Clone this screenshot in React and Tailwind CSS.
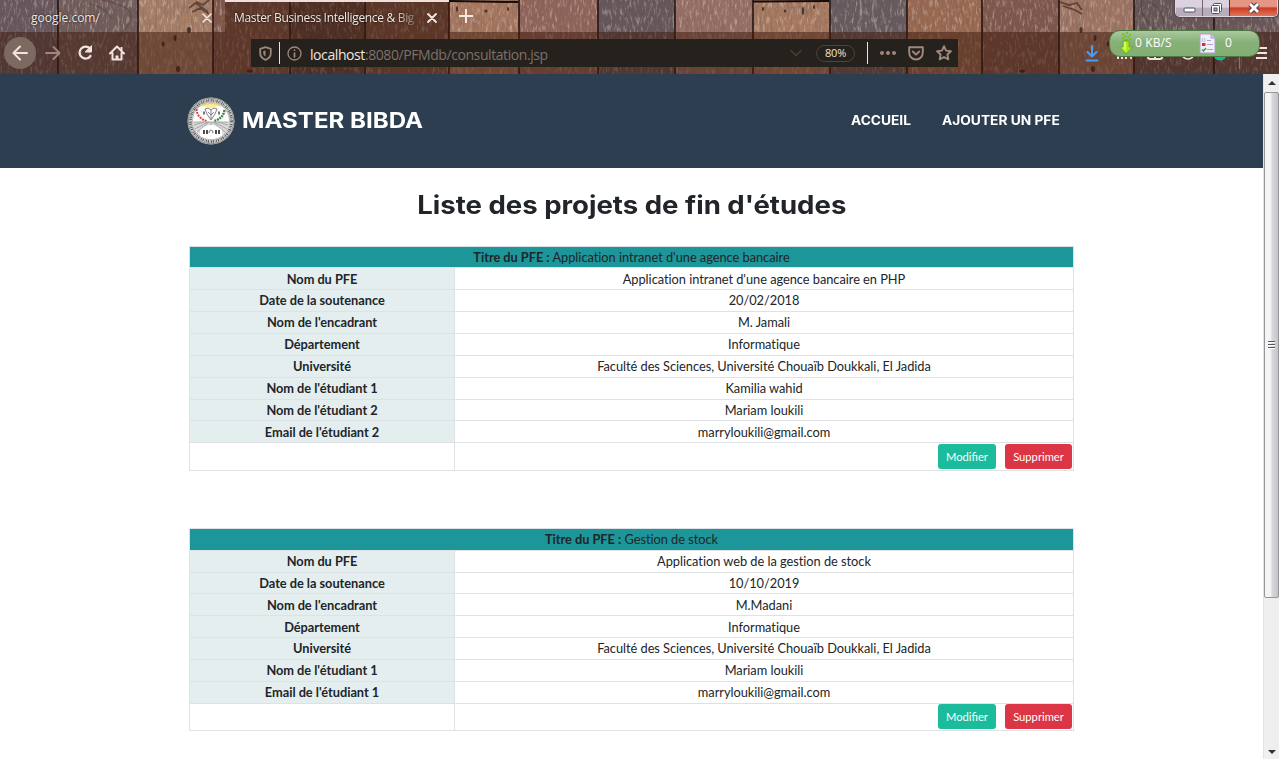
import React from "react";

const planks = [
  [0, 58, "#66575d"], [58, 80, "#705c5a"], [138, 75, "#a67d65"], [213, 77, "#7f5648"],
  [290, 75, "#60453d"], [365, 84, "#7c5545"], [449, 70, "#a6775e"], [519, 79, "#906459"],
  [598, 77, "#64565a"], [675, 78, "#966f64"], [753, 77, "#a67960"], [830, 77, "#665a5e"],
  [907, 75, "#996951"], [982, 77, "#7f564b"], [1059, 75, "#9e7462"], [1134, 80, "#655557"],
  [1214, 65, "#685657"],
];

const knots = [
  [189, 30, 2, 3], [175, 38, 1.5, 3], [163, 44, 1.5, 2.5], [178, 69, 2, 3], [457, 9, 1, 3], [486, 11, 1.5, 1.5],
  [508, 9, 1, 2], [763, 9, 1.2, 2], [785, 11, 1.2, 1.5], [803, 11, 1, 4], [814, 7, 1, 2], [1081, 30, 1.5, 3],
  [1095, 38, 1.5, 3], [1108, 44, 1.5, 2.5], [1093, 69, 2, 3], [1022, 71, 3, 1.5], [250, 71, 3, 1.5],
];

function Wood() {
  return (
    <svg className="absolute inset-0" width="1279" height="74" viewBox="0 0 1279 74" aria-hidden="true">
      <defs>
        <filter id="grainDark" x="0" y="0" width="100%" height="100%">
          <feTurbulence type="fractalNoise" baseFrequency="0.45 0.06" numOctaves="5" seed="8" />
          <feColorMatrix values="0 0 0 0 0.16  0 0 0 0 0.1  0 0 0 0 0.1  3 0 0 0 -1.35" />
        </filter>
        <filter id="grainLight" x="0" y="0" width="100%" height="100%">
          <feTurbulence type="fractalNoise" baseFrequency="0.4 0.12" numOctaves="5" seed="21" />
          <feColorMatrix values="0 0 0 0 0.78  0 0 0 0 0.68  0 0 0 0 0.62  0 3.4 0 0 -1.75" />
        </filter>
      </defs>
      {planks.map(([x, w, c]) => (
        <rect key={x} x={x} y="0" width={w} height="74" fill={c} />
      ))}
      <rect width="1279" height="74" filter="url(#grainDark)" opacity="0.32" />
      <rect width="1279" height="74" filter="url(#grainLight)" opacity="0.4" />
      {planks.slice(1).map(([x]) => (
        <path key={x} d={`M${x} 0V74`} stroke="#20120f" strokeWidth="1.8" opacity="0.85" />
      ))}
      <path d="M449 1L518 2M753 1.5L829 1" stroke="#120b0a" strokeWidth="2" />
      <path d="M189 8l8-6 6 3 6-5M192 12l8-4 9 6M196 3l12 9M1060 2l9 3 8-2 5 7M1063 6l12 4 7 4" stroke="#382822" strokeWidth="1.8" fill="none" opacity="0.65" />
      <path d="M102 0q30 6 29 16t-13 21M90 4q14 3 22 14M1142 0q-3 12 6 22t10 18M1148 2q14 5 16 22" stroke="#443733" strokeWidth="1.2" fill="none" opacity="0.45" />
      <path d="M860 0q4 14-2 24M874 0q-4 14 4 32" stroke="#b7a79d" strokeWidth="2" fill="none" opacity="0.35" />
      {knots.map(([x, y, a, b]) => (
        <ellipse key={`${x}-${y}`} cx={x} cy={y} rx={a} ry={b} fill="#2b1a15" opacity="0.75" />
      ))}
      <rect x="0" y="32" width="1279" height="42" fill="#3c1709" opacity="0.5" />
      <rect x="225" y="0" width="224" height="32" fill="#3c1709" opacity="0.5" />
      <rect x="225" y="0" width="224" height="2" fill="#eee0da" />
    </svg>
  );
}

function Ico({ w = 16, h = 16, children, className = "" }) {
  return (
    <svg width={w} height={h} viewBox={`0 0 ${w} ${h}`} fill="none" stroke="currentColor" strokeWidth="2" strokeLinecap="round" strokeLinejoin="round" className={`shrink-0 ${className}`}>
      {children}
    </svg>
  );
}

function Tabs() {
  return (
    <div className="flex h-8 items-center text-[12px] text-[#f3e9e4] [text-shadow:0_0_2px_#000]">
      <div className="flex h-8 w-[225px] items-center pt-1 pl-[31px]">
        <span className="w-[171px]">google.com/</span>
        <Ico w={10} h={10}><path strokeWidth="1.5" d="M1 1l8 8M9 1l-8 8" /></Ico>
      </div>
      <div className="flex h-8 w-[224px] items-center pt-1 pl-[9px]">
        <span className="w-[184px] whitespace-nowrap tracking-[-0.32px] [mask-image:linear-gradient(to_right,#000_160px,transparent_188px)]">
          Master Business Intelligence &amp; Big
        </span>
        <Ico w={10} h={10} className="ml-[9px]"><path strokeWidth="1.8" d="M1 1l8 8M9 1l-8 8" /></Ico>
      </div>
      <Ico w={16} h={16} className="ml-[9px]"><path strokeLinecap="butt" d="M8 1v14M1 8h14" /></Ico>
    </div>
  );
}

function Toolbar() {
  return (
    <div className="flex h-[42px] items-center pl-1 text-[#f1e4dd]">
      <div className="flex size-8 items-center justify-center rounded-full bg-[#7c6960]">
        <Ico><path d="M15 8H1.5M8 1.5L1.5 8 8 14.5" /></Ico>
      </div>
      <Ico className="ml-[9px] text-[#a0857b]"><path d="M1 8h13.5M8.500 2l6 6-6 6" /></Ico>
      <Ico className="ml-[16px]">
        <path d="M13 3.500A6 6 0 1 0 13.500 11" strokeWidth="2.200" />
        <path d="M14.500 1v6h-6z" fill="currentColor" strokeWidth="1" />
      </Ico>
      <Ico className="ml-[16px]">
        <path d="M1 8.500L8 1.500l7 7M3.500 8v6.500h9V8" />
        <path d="M8 14v-3.500" strokeWidth="3" strokeLinecap="butt" />
        <path d="M12.500 2v3" strokeLinecap="butt" />
      </Ico>
      <div className="ml-[126px] flex h-7 w-[707px] items-center bg-[#25211c] pl-2 text-[#a0887e]">
        <Ico w={13} h={15}>
          <path d="M6.500 1.200L11.800 2.800V7c0 3.500-2 5.600-5.300 6.800C3.200 12.600 1.200 10.500 1.200 7V2.800z" strokeWidth="1.800" />
          <path d="M6.500 4.500v6C5 9.500 4.300 8.500 4.300 7V5z" fill="currentColor" stroke="none" />
        </Ico>
        <div className="ml-[7px] h-[22px] w-px bg-[#eee4de]" />
        <Ico w={15} h={15} className="ml-[7px]">
          <circle cx="7.500" cy="7.500" r="6.500" strokeWidth="1.300" />
          <path d="M7.500 7v4M7.500 4v.2" strokeWidth="1.700" />
        </Ico>
        <span className="ml-[8px] w-[480px] pt-[3px] text-[14px] leading-5 tracking-[-0.42px] whitespace-nowrap text-[#7d7169]">
          <span className="text-[#f3e4dc]">localhost</span>:8080/PFMdb/consultation.jsp
        </span>
        <Ico w={12} h={8} className="text-[#474039]"><path d="M1 1.500l5 5 5-5" strokeWidth="1.600" /></Ico>
        <div className="ml-[14px] flex h-[17px] w-[39px] items-center justify-center rounded-full border border-[#4d453e] pt-px text-[11px] tracking-[-0.2px] text-[#f1e3db]">80%</div>
        <div className="ml-[12px] h-[22px] w-px bg-[#eee4de]" />
        <Ico w={16} h={4} className="ml-[12px]"><path d="M2 2h.01M8 2h.01M14 2h.01" strokeWidth="4" /></Ico>
        <Ico w={16} h={15} className="ml-[12px]">
          <path d="M1.200 1.200h13.600V6.500c0 4-3 7-6.800 7s-6.800-3-6.800-7z" strokeWidth="1.900" />
          <path d="M4.800 5.500L8 8.600l3.200-3.100" />
        </Ico>
        <Ico className="ml-[12px]">
          <path d="M8 1.200l2.100 4.400 4.800.6-3.500 3.300.9 4.800L8 12l-4.300 2.300.9-4.800L1.100 6.200l4.800-.6z" strokeWidth="1.900" />
        </Ico>
      </div>
      <Ico w={14} h={17} className="ml-[127px] text-[#4a9df5]">
        <path d="M7 1v10M2.500 7L7 11.500 11.500 7M1.500 15.500h11" />
      </Ico>
      <Ico w={16} h={16} className="ml-[17px]"><path d="M2 2v12M6 2v12M10 2v12M12 4l3.500 10" strokeLinecap="butt" /></Ico>
      <Ico w={16} h={16} className="ml-[15px]"><rect x="1" y="2" width="14" height="12" rx="2" /><path d="M8 2v11" /></Ico>
      <Ico w={16} h={16} className="ml-[17px]"><circle cx="8" cy="7.500" r="6.500" strokeWidth="1.500" /><path d="M4.500 10.500q3.500-3 7 0" strokeWidth="1.500" /></Ico>
      <Ico w={16} h={16} className="ml-[16px] text-[#15b894]"><circle cx="8" cy="8.500" r="7" fill="currentColor" stroke="none" /></Ico>
      <div className="ml-[11px] h-8 w-px bg-[#8d7468]" />
      <Ico w={13} h={14} className="ml-[15px]"><path d="M1 2h11M1 7h11M1 12h11" strokeLinecap="butt" /></Ico>
    </div>
  );
}

function WindowButtons() {
  return (
    <div className="absolute top-0 left-[1175px] flex h-[17px] w-[103px] overflow-hidden rounded-b-[5px] border border-t-0 border-[#ded5df] shadow-[0_0_1px_1px_#51464c]">
      <div className="flex w-[27px] items-center justify-center border-r border-[#716670] bg-linear-to-b from-[#dad2de] from-45% to-[#b9adbd] to-50% pt-[4px]">
        <svg width="13" height="6"><rect x="1" y="1" width="11" height="4" rx="1" fill="#fff" stroke="#4d5060" /></svg>
      </div>
      <div className="flex w-[27px] items-center justify-center border-r border-[#5e3035] bg-linear-to-b from-[#dad2de] from-45% to-[#b9adbd] to-50%">
        <svg width="13" height="13" fill="#fff" stroke="#4d5060"><rect x="3.500" y="1.500" width="8" height="8" rx="1" /><rect x="1.500" y="3.500" width="8" height="8" rx="1" /><rect x="4" y="6" width="3" height="3" fill="#aaa2af" /></svg>
      </div>
      <div className="flex flex-1 items-center justify-center bg-linear-to-b from-[#e79684] from-40% via-[#cb3a24] via-50% to-[#e0745a]">
        <svg width="14" height="12" viewBox="0 0 14 12"><path d="M3 2l8 8M11 2L3 10" stroke="#51434c" strokeWidth="5" /><path d="M3 2l8 8M11 2L3 10" stroke="#fff" strokeWidth="2.800" /></svg>
      </div>
    </div>
  );
}

function SpeedWidget() {
  return (
    <div className="absolute top-[30px] left-[1109px] flex h-[27px] w-[151px] items-center rounded-[11px] border border-[#4f7743] bg-linear-to-b from-[#abc99f] via-[#86b077] via-45% to-[#82ad73] text-[12px] text-white">
      <svg width="14" height="23" viewBox="0 0 14 23" className="ml-[9px]">
        <g fill="#75c41b"><path d="M3 1h2v2H3zM7 0h2v2H7zM10 2h2v2h-2zM5 3h2v2H5zM3 5h2v2H3zM8 4h2v2H8zM10 6h2v2h-2zM5 7h4v2H5z" /></g>
        <path d="M4 9h6v6h3.500L7 22 .5 15H4z" fill="#a7e81f" stroke="#64aa16" strokeWidth="0.800" />
        <path d="M5 10h2v9l-4-3.500h2z" fill="#d6f86f" />
      </svg>
      <span className="ml-[2px] w-[64px] pb-px tracking-[0.1px] whitespace-nowrap">0 KB/S</span>
      <svg width="17" height="21" viewBox="0 0 17 21">
        <path d="M1 1h11l4 4v15H1z" fill="#f2effb" stroke="#a9a0c8" />
        <path d="M12 1v4h4" fill="#d2cce6" stroke="#a9a0c8" />
        <circle cx="4.500" cy="7" r="1.500" fill="#fff" stroke="#9c96b4" strokeWidth="0.700" />
        <path d="M3 10h3.500v3H3z" fill="#d8302b" />
        <path d="M3 16.500l1.500 1.500L7 15" stroke="#2f9f40" strokeWidth="1.400" fill="none" />
        <path d="M8 7.500h4M8 11.500h6M8 16.500h6" stroke="#aaa3c5" />
      </svg>
      <span className="ml-[9px] pb-px">0</span>
    </div>
  );
}

function Seal() {
  return (
    <svg width="48" height="48" viewBox="0 0 48 48" className="shrink-0" aria-hidden="true">
      <circle cx="24" cy="24" r="23.500" fill="#dedede" />
      <circle cx="24" cy="24" r="22.800" fill="none" stroke="#6c6c6c" strokeWidth="0.700" />
      <circle cx="24" cy="24" r="20.600" fill="none" stroke="#606060" strokeWidth="2.800" strokeDasharray="1 .7 .5 .9 1.300 .8" />
      <circle cx="24" cy="24" r="18.500" fill="#fdfdfd" stroke="#999" strokeWidth="0.600" />
      <path d="M12.500 9.500Q24 2 35.500 9.500Q24 6.500 12.500 9.500z" fill="#edcf54" />
      <path d="M15 9Q24 5 33 9L24 11z" fill="#f9eba2" />
      <path d="M9.500 12q.5 9 10 12" stroke="#d94343" strokeWidth="2" strokeDasharray="2 1" fill="none" />
      <path d="M37.500 13q-1 8-10 11" stroke="#3c8442" strokeWidth="2.400" strokeDasharray="2 .8" fill="none" />
      <path d="M18 12l3-1 3 2 3-2 3 1-2 5-4 6-4-6zM21 15l3 3 3-3M24 13v9" stroke="#666" strokeWidth="0.800" fill="none" />
      <path d="M16 16h2M31 16h2" stroke="#777" strokeWidth="3" />
      <path d="M5.500 25h37q-1 8-7 12H12.500q-6-4-7-12z" fill="#d9d9d9" />
      <path d="M6.500 25h35M7 28l10-3M8 32l13-7M10 35l12-10M41 28l-10-3M40 32l-13-7M38 35L26 25M24 25v4" stroke="#9b9b9b" strokeWidth="0.800" />
      <path d="M13 39V33q11-10 22 0v6q-11 6-22 0z" fill="#fff" />
      <path d="M17 33v4M20 33v4M29 33v4M32 33v4" stroke="#222" strokeWidth="1.600" />
      <path d="M22 36q0-3 2-3t2 3" stroke="#777" fill="none" />
    </svg>
  );
}

const projects = [
  {
    title: "Application intranet d'une agence bancaire",
    rows: [
      ["Nom du PFE", "Application intranet d'une agence bancaire en PHP"],
      ["Date de la soutenance", "20/02/2018"],
      ["Nom de l'encadrant", "M. Jamali"],
      ["Département", "Informatique"],
      ["Université", "Faculté des Sciences, Université Chouaïb Doukkali, El Jadida"],
      ["Nom de l'étudiant 1", "Kamilia wahid"],
      ["Nom de l'étudiant 2", "Mariam loukili"],
      ["Email de l'étudiant 2", "marryloukili@gmail.com"],
    ],
  },
  {
    title: "Gestion de stock",
    rows: [
      ["Nom du PFE", "Application web de la gestion de stock"],
      ["Date de la soutenance", "10/10/2019"],
      ["Nom de l'encadrant", "M.Madani"],
      ["Département", "Informatique"],
      ["Université", "Faculté des Sciences, Université Chouaïb Doukkali, El Jadida"],
      ["Nom de l'étudiant 1", "Mariam loukili"],
      ["Email de l'étudiant 1", "marryloukili@gmail.com"],
    ],
  },
];

function ProjectTable({ title, rows }) {
  return (
    <div className="w-[885px] border border-[#dee2e6] text-center text-[12.8px] leading-[21px] [font-variant-ligatures:none]">
      <div className="h-[20.4px] bg-[#1c9699] tracking-[-0.03px]">
        <b>Titre du PFE :</b> {title}
      </div>
      {rows.map(([k, v]) => (
        <div key={k} className="flex h-[21.86px] border-t border-[#dee2e6]">
          <div className="w-[265px] shrink-0 border-r border-[#dee2e6] bg-[#e4eeef] pt-[0.2px] font-bold tracking-[-0.03px]">{k}</div>
          <div className="flex-1 pt-[0.2px] tracking-[-0.03px]">{v}</div>
        </div>
      ))}
      <div className="flex h-[27.6px] border-t border-[#dee2e6] text-[11.2px] leading-[25px] text-white">
        <div className="w-[265px] shrink-0 border-r border-[#dee2e6]" />
        <div className="flex flex-1 items-start justify-end gap-[9px] pt-[0.7px] pr-px [font-variant-ligatures:normal]">
          <button className="h-[25px] w-[58px] rounded-[3px] bg-[#1abc9c]">Modifier</button>
          <button className="h-[25px] w-[67px] rounded-[3px] bg-[#dc3545]">Supprimer</button>
        </div>
      </div>
    </div>
  );
}

function Scrollbar() {
  return (
    <div className="flex w-4 flex-col items-center border-l border-[#e3e3e3] bg-linear-to-r from-[#f0f0f0] to-[#eeeeee]">
      <div className="flex h-[18px] items-center"><svg width="8" height="4"><path d="M0 4L4 0l4 4z" fill="#333" /></svg></div>
      <div className="flex h-[506px] w-[15px] flex-col items-center justify-center gap-px rounded-[2px] border border-[#979797] bg-linear-to-r from-[#f5f5f5] from-40% via-[#d8d9dc] via-55% to-[#c3c4c9]">
        <div className="h-[2px] w-[7px] border-t border-[#555] bg-white" />
        <div className="h-[2px] w-[7px] border-t border-[#555] bg-white" />
        <div className="h-[2px] w-[7px] border-t border-[#555] bg-white" />
      </div>
      <div className="mt-auto flex h-[15px] items-center"><svg width="8" height="4"><path d="M0 0h8L4 4z" fill="#333" /></svg></div>
    </div>
  );
}

export default function App() {
  return (
    <div className="flex h-[759px] w-[1279px] flex-col overflow-hidden bg-white font-['Lato',sans-serif] text-[#212529]">
      <header className="relative h-[74px] shrink-0 font-['Open_Sans',sans-serif]">
        <Wood />
        <div className="relative">
          <Tabs />
          <Toolbar />
        </div>
        <WindowButtons />
        <SpeedWidget />
      </header>
      <div className="flex min-h-0 flex-1">
        <main className="flex w-[1263px] flex-col items-center">
          <nav className="flex h-[94px] w-full shrink-0 items-center bg-[#2c3e50] pl-[187px] font-['Inter',sans-serif] font-bold whitespace-nowrap text-white">
            <Seal />
            <div className="ml-[7px] w-[609px] pb-[2px] text-[21.6px]">
              <span className="inline-block origin-left scale-x-[1.115]">MASTER BIBDA</span>
            </div>
            <div className="w-[91px] pt-px text-[12.6px]">
              <span className="inline-block origin-left scale-x-[1.09]">ACCUEIL</span>
            </div>
            <div className="pt-px text-[12.6px]">
              <span className="inline-block origin-left scale-x-[1.09]">AJOUTER UN PFE</span>
            </div>
          </nav>
          <h1 className="mt-[17px] h-[61px] scale-x-[1.085] font-['Inter',sans-serif] text-[25.4px] leading-[40px] font-bold">
            Liste des projets de fin d'études
          </h1>
          <div className="flex flex-col gap-[57.5px]">
            {projects.map((p) => (
              <ProjectTable key={p.title} {...p} />
            ))}
          </div>
        </main>
        <Scrollbar />
      </div>
    </div>
  );
}
